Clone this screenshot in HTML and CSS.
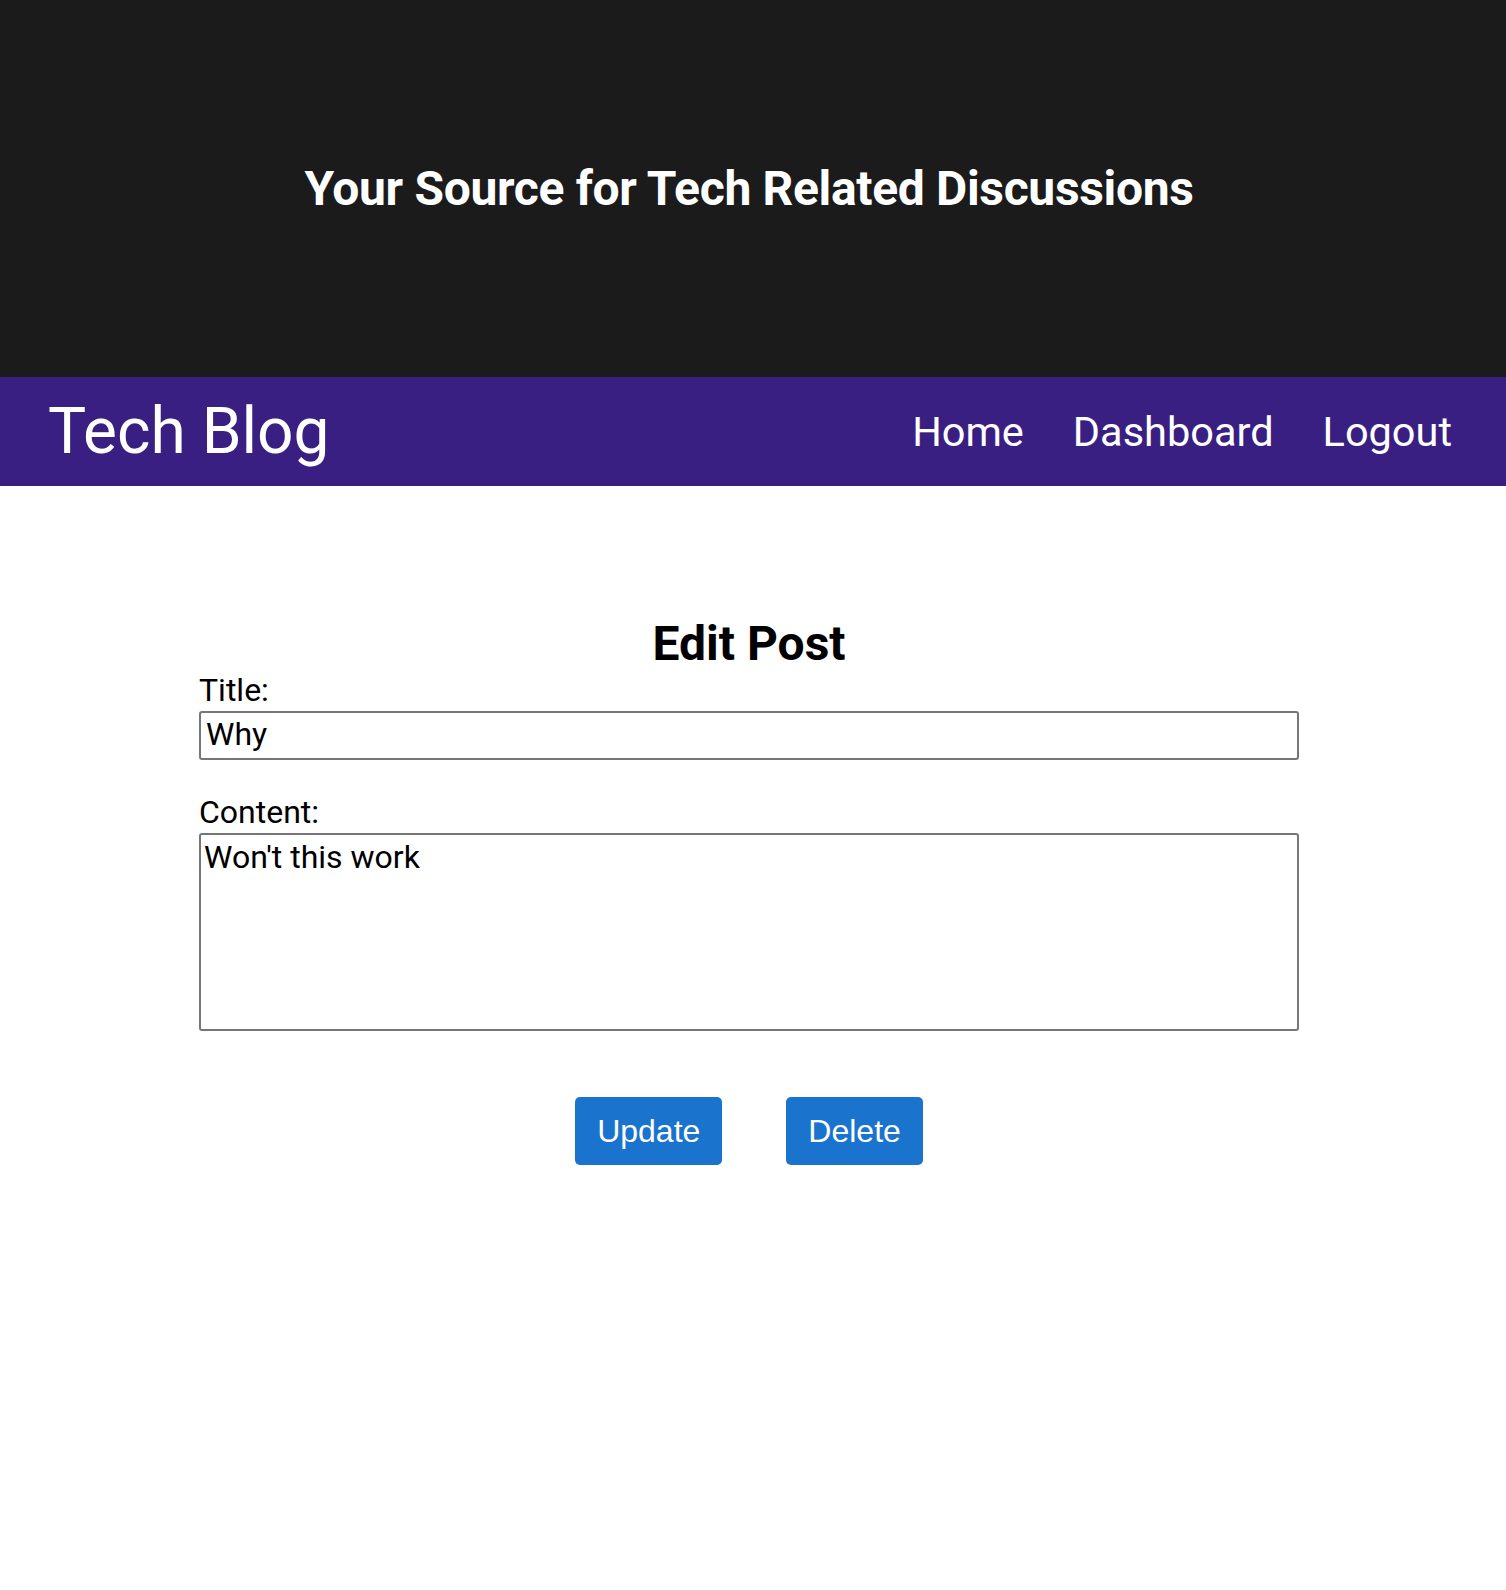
FILE: index.html
```html
<!DOCTYPE html>
<html lang="en">
<head>
<meta charset="utf-8">
<title>Tech Blog</title>
<link rel="stylesheet" href="styles.css">
</head>
<body>
<header class="hero">
  <h1 class="hero-title">Your Source for Tech Related Discussions</h1>
</header>
<nav class="nav">
  <a class="brand" href="#">Tech Blog</a>
  <div class="nav-links">
    <a class="nav-link" href="#">Home</a>
    <a class="nav-link" href="#">Dashboard</a>
    <a class="nav-link" href="#">Logout</a>
  </div>
</nav>
<main class="main">
  <form class="edit-form">
    <h2 class="form-title">Edit Post</h2>
    <label class="field-label" for="title">Title:</label>
    <input class="field-input" id="title" type="text" value="Why" autofocus>
    <label class="field-label field-label-spaced" for="content">Content:</label>
    <textarea class="field-textarea" id="content">Won't this work</textarea>
    <div class="actions">
      <button class="btn" type="button">Update</button>
      <button class="btn" type="button">Delete</button>
    </div>
  </form>
</main>
</body>
</html>
```
FILE: styles.css
```css
* { box-sizing: border-box; }
html, body { margin: 0; padding: 0; background: #ffffff; }
body { font-family: Roboto, "Liberation Sans", sans-serif; color: #000; }

.hero {
  height: 377px;
  background: #1b1b1b;
  display: flex;
  align-items: center;
  justify-content: center;
  padding-right: 8px;
}
.hero-title {
  margin: 0;
  color: #ffffff;
  font-size: 48px;
  font-weight: 700;
  letter-spacing: -0.33px;
}

.nav {
  height: 109px;
  background: #3a1f83;
  display: flex;
  align-items: center;
  justify-content: space-between;
  padding: 0 54px 0 48px;
}
.brand {
  color: #fff;
  text-decoration: none;
  font-size: 64px;
  font-weight: 400;
  line-height: 1;
}
.nav-links { display: flex; gap: 49px; }
.nav-link {
  color: #fff;
  text-decoration: none;
  font-size: 41.5px;
  line-height: 1;
}

.main { padding: 130px 8px 0 0; }
.edit-form {
  width: 1100px;
  margin: 0 auto;
  display: flex;
  flex-direction: column;
}
.form-title {
  margin: 0;
  text-align: center;
  font-size: 48px;
  font-weight: 700;
  line-height: 56px;
}
.field-label {
  font-size: 32px;
  line-height: 37px;
  margin-bottom: 2px;
}
.field-label-spaced { margin-top: 34px; }
.field-input {
  height: 49px;
  border: 2px solid #767676;
  border-radius: 3px;
  padding: 1px 5px 5px;
  font-family: Roboto, sans-serif;
  font-size: 32px;
  color: #000;
  outline: none;
}
.field-textarea {
  height: 198px;
  border: 2px solid #767676;
  border-radius: 3px;
  padding: 4px 3px 2px;
  font-family: Roboto, sans-serif;
  font-size: 32px;
  line-height: 37px;
  resize: none;
  color: #000;
}
.actions {
  display: flex;
  justify-content: center;
  gap: 64px;
  margin-top: 66px;
}
.btn {
  background: #1a73cd;
  color: #fff;
  border: none;
  border-radius: 5px;
  font-family: "Liberation Sans", Arial, sans-serif;
  font-size: 32px;
  line-height: 36px;
  padding: 16px 22px;
}
```
